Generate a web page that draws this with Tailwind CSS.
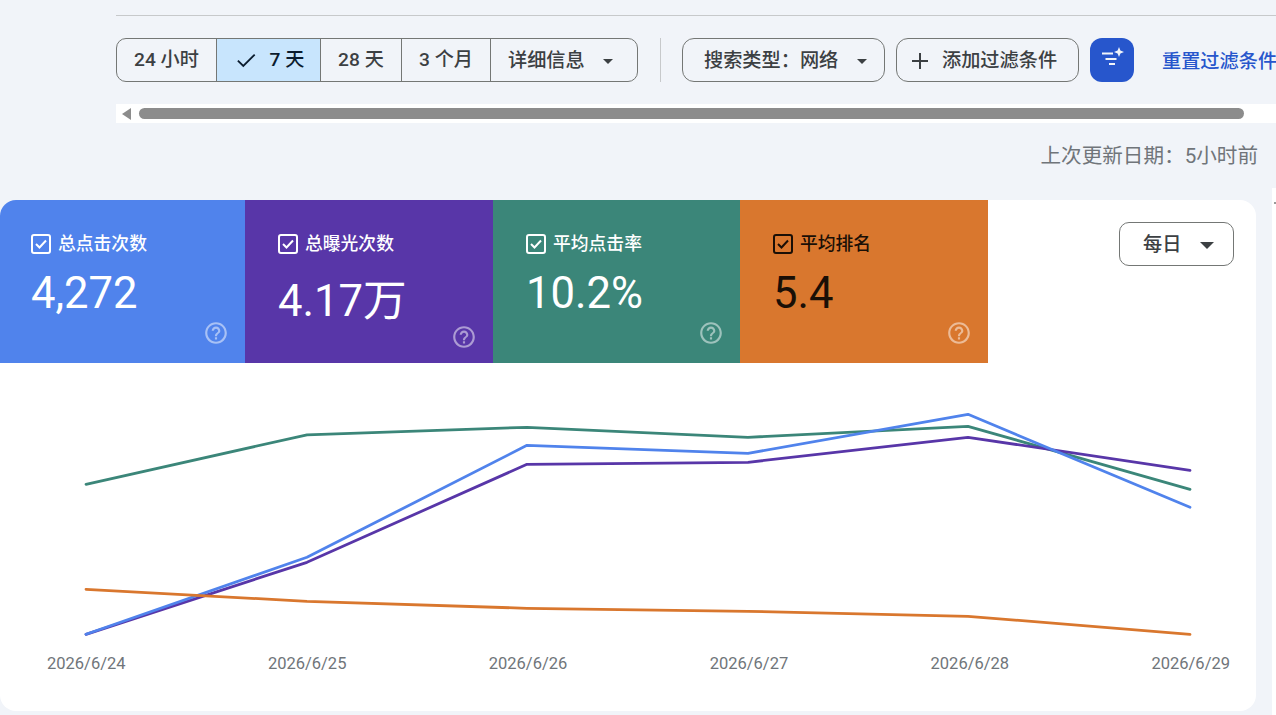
<!DOCTYPE html>
<html lang="zh-CN">
<head>
    <meta charset="UTF-8">
    <title>效果</title>
    <script src="https://cdn.jsdelivr.net/npm/@tailwindcss/browser@4"></script>
</head>
<body class="bg-[#f1f4f9] h-screen w-screen overflow-hidden font-['Roboto','Noto_Sans_CJK_SC',sans-serif]">
    <!-- 顶部分隔线 -->
    <div class="ml-[116px] mt-[15px] h-px bg-[#c7c9cb]"></div>

    <!-- 过滤条 -->
    <div class="ml-[116px] mt-[22px] flex h-[44px] items-center whitespace-nowrap text-[19.200px] font-medium text-[#3c4043]">
        <div class="flex h-[44px] w-[522px] shrink-0 overflow-hidden rounded-[10px] border border-[#747775]">
            <div class="flex w-[100px] items-center justify-center border-r border-[#747775]">24 小时</div>
            <div class="flex w-[104px] items-center justify-center gap-[11px] border-r border-[#747775] bg-[#c8e5fd] text-[#0b1c2e]">
                <svg class="h-[26px] w-[26px]" viewBox="0 0 24 24" fill="none" stroke="currentColor" stroke-width="1.700"><path d="M4.500 12.500l5 5L20 7"/></svg>
                <span>7 天</span>
            </div>
            <div class="flex w-[81px] items-center justify-center border-r border-[#747775]">28 天</div>
            <div class="flex w-[89px] items-center justify-center border-r border-[#747775]">3 个月</div>
            <div class="flex flex-1 items-center pl-[17px] pt-[2px]">
                <span>详细信息</span>
                <span class="ml-[18px] h-0 w-0 border-x-[5px] border-t-[5px] border-x-transparent border-t-[#3c4043]"></span>
            </div>
        </div>
        <div class="ml-[22px] h-[44px] w-px shrink-0 bg-[#c7c9cb]"></div>
        <div class="ml-[21px] flex h-[44px] w-[203px] shrink-0 items-center rounded-[12px] border border-[#747775] pl-[21px] pt-[2px]">
            <span>搜索类型：网络</span>
            <span class="ml-[19px] h-0 w-0 border-x-[5px] border-t-[5px] border-x-transparent border-t-[#3c4043]"></span>
        </div>
        <div class="ml-[11px] flex h-[44px] w-[183px] shrink-0 items-center rounded-[12px] border border-[#747775] pl-[13px] pt-[2px]">
            <svg class="h-[20px] w-[20px]" viewBox="0 0 20 20" fill="none" stroke="currentColor" stroke-width="2"><path d="M10 2v16M2 10h16"/></svg>
            <span class="ml-[12px]">添加过滤条件</span>
        </div>
        <div class="ml-[11px] flex h-[44px] w-[44px] shrink-0 items-center justify-center rounded-[12px] bg-[#2756cc]">
            <svg class="h-[26px] w-[26px]" viewBox="0 0 26 26" fill="#f1f4f9">
                <rect x="3" y="5.500" width="11" height="2"/>
                <rect x="6.500" y="11" width="11" height="2"/>
                <rect x="10" y="16" width="6" height="2"/>
                <path d="M20 0l1.400 3.600L25 5l-3.600 1.400L20 10l-1.400-3.600L15 5l3.600-1.400z"/>
            </svg>
        </div>
        <span class="ml-[28px] pt-[4px] text-[#2756cc]">重置过滤条件</span>
    </div>

    <!-- 横向滚动条 -->
    <div class="ml-[116px] mt-[22px] flex h-[19px] items-center bg-white pl-[6px]">
        <span class="h-0 w-0 border-y-[6px] border-r-[9px] border-y-transparent border-r-[#8c8c8c]"></span>
        <div class="ml-[8px] h-[11px] w-[1105px] rounded-full bg-[#8c8c8c]"></div>
    </div>

    <p class="mt-[21px] h-[24px] pr-[18px] text-right text-[20.600px] leading-[24px] text-[#70757a]">上次更新日期：5小时前</p>

    <div class="mt-[32px] flex items-start">
        <!-- 效果卡片 -->
        <div class="h-[511px] w-[1256px] shrink-0 overflow-hidden rounded-[16px] bg-white">
            <div class="flex h-[163px]">
                <div class="flex w-[245px] flex-col bg-[#5083ec] pl-[31px] pr-[16px] pt-[33px] text-white">
                    <div class="flex h-[22px] items-center gap-[7px] text-[17.800px] font-medium">
                        <svg class="h-[20px] w-[20px]" viewBox="0 0 20 20" fill="none" stroke="currentColor"><rect x="1" y="1" width="18" height="18" rx="2" stroke-width="2"/><path d="M5 10l3.500 3.500L15 6.500" stroke-width="2"/></svg>
                        <span>总点击次数</span>
                    </div>
                    <div class="mt-[17px] text-[43.600px] leading-[44px]">4,272</div>
                    <svg class="mb-[17px] mt-auto h-[26px] w-[26px] shrink-0 self-end opacity-50" viewBox="0 0 24 24" fill="currentColor"><path d="M11 18h2v-2h-2v2zm1-16C6.480 2 2 6.480 2 12s4.480 10 10 10 10-4.480 10-10S17.520 2 12 2zm0 18c-4.410 0-8-3.590-8-8s3.590-8 8-8 8 3.590 8 8-3.590 8-8 8zm0-14c-2.210 0-4 1.790-4 4h2c0-1.100.9-2 2-2s2 .9 2 2c0 2-3 1.750-3 5h2c0-2.250 3-2.500 3-5 0-2.210-1.790-4-4-4z"/></svg>
                </div>
                <div class="flex w-[248px] flex-col bg-[#5836a8] pl-[33px] pr-[16px] pt-[33px] text-white">
                    <div class="flex h-[22px] items-center gap-[7px] text-[17.800px] font-medium">
                        <svg class="h-[20px] w-[20px]" viewBox="0 0 20 20" fill="none" stroke="currentColor"><rect x="1" y="1" width="18" height="18" rx="2" stroke-width="2"/><path d="M5 10l3.500 3.500L15 6.500" stroke-width="2"/></svg>
                        <span>总曝光次数</span>
                    </div>
                    <div class="mt-[25px] text-[43.600px] leading-[44px]">4.17万</div>
                    <svg class="mb-[17px] mt-auto h-[26px] w-[26px] shrink-0 self-end opacity-50" viewBox="0 0 24 24" fill="currentColor"><path d="M11 18h2v-2h-2v2zm1-16C6.480 2 2 6.480 2 12s4.480 10 10 10 10-4.480 10-10S17.520 2 12 2zm0 18c-4.410 0-8-3.590-8-8s3.590-8 8-8 8 3.590 8 8-3.590 8-8 8zm0-14c-2.210 0-4 1.790-4 4h2c0-1.100.9-2 2-2s2 .9 2 2c0 2-3 1.750-3 5h2c0-2.250 3-2.500 3-5 0-2.210-1.790-4-4-4z"/></svg>
                </div>
                <div class="flex w-[247px] flex-col bg-[#3b8679] pl-[33px] pr-[16px] pt-[33px] text-white">
                    <div class="flex h-[22px] items-center gap-[7px] text-[17.800px] font-medium">
                        <svg class="h-[20px] w-[20px]" viewBox="0 0 20 20" fill="none" stroke="currentColor"><rect x="1" y="1" width="18" height="18" rx="2" stroke-width="2"/><path d="M5 10l3.500 3.500L15 6.500" stroke-width="2"/></svg>
                        <span>平均点击率</span>
                    </div>
                    <div class="mt-[17px] text-[43.600px] leading-[44px]">10.2%</div>
                    <svg class="mb-[17px] mt-auto h-[26px] w-[26px] shrink-0 self-end opacity-50" viewBox="0 0 24 24" fill="currentColor"><path d="M11 18h2v-2h-2v2zm1-16C6.480 2 2 6.480 2 12s4.480 10 10 10 10-4.480 10-10S17.520 2 12 2zm0 18c-4.410 0-8-3.590-8-8s3.590-8 8-8 8 3.590 8 8-3.590 8-8 8zm0-14c-2.210 0-4 1.790-4 4h2c0-1.100.9-2 2-2s2 .9 2 2c0 2-3 1.750-3 5h2c0-2.250 3-2.500 3-5 0-2.210-1.790-4-4-4z"/></svg>
                </div>
                <div class="flex w-[248px] flex-col bg-[#d9772e] pl-[33px] pr-[16px] pt-[33px] text-[#1a0f06]">
                    <div class="flex h-[22px] items-center gap-[7px] text-[17.800px] font-medium">
                        <svg class="h-[20px] w-[20px]" viewBox="0 0 20 20" fill="none" stroke="currentColor"><rect x="1" y="1" width="18" height="18" rx="2" stroke-width="2"/><path d="M5 10l3.500 3.500L15 6.500" stroke-width="2"/></svg>
                        <span>平均排名</span>
                    </div>
                    <div class="mt-[17px] text-[43.600px] leading-[44px]">5.4</div>
                    <svg class="mb-[17px] mt-auto h-[26px] w-[26px] shrink-0 self-end text-white opacity-50" viewBox="0 0 24 24" fill="currentColor"><path d="M11 18h2v-2h-2v2zm1-16C6.480 2 2 6.480 2 12s4.480 10 10 10 10-4.480 10-10S17.520 2 12 2zm0 18c-4.410 0-8-3.590-8-8s3.590-8 8-8 8 3.590 8 8-3.590 8-8 8zm0-14c-2.210 0-4 1.790-4 4h2c0-1.100.9-2 2-2s2 .9 2 2c0 2-3 1.750-3 5h2c0-2.250 3-2.500 3-5 0-2.210-1.790-4-4-4z"/></svg>
                </div>
                <div class="flex flex-1 justify-end pr-[22px] pt-[22px]">
                    <div class="flex h-[44px] w-[115px] items-center rounded-[10px] border border-[#747775] pl-[23px] pt-[3px] text-[19.200px] font-medium text-[#3c4043]">
                        <span>每日</span>
                        <span class="ml-[19px] h-0 w-0 border-x-[7px] border-t-[7px] border-x-transparent border-t-[#3c4043]"></span>
                    </div>
                </div>
            </div>

            <!-- 折线图 -->
            <svg class="block h-[284px] w-[1256px]" viewBox="0 362.700 1256 284" fill="none" stroke-width="2.800" stroke-linejoin="round" stroke-linecap="round">
                <polyline stroke="#3b8679" points="86,484 307,434.500 527,427 748,437 968,426 1190,489"/>
                <polyline stroke="#5836a8" points="86,634 307,562 527,464 748,462 968,437 1190,470"/>
                <polyline stroke="#5083ec" points="86,634 307,557 527,445 748,453 968,414 1190,507"/>
                <polyline stroke="#d9772e" points="86,589 307,601 527,608 748,611 968,616 1190,634"/>
            </svg>
            <div class="mt-[6px] flex justify-between pl-[47px] pr-[26px] text-[16.500px] leading-[22px] text-[#70757a]">
                <span>2026/6/24</span>
                <span>2026/6/25</span>
                <span>2026/6/26</span>
                <span>2026/6/27</span>
                <span>2026/6/28</span>
                <span>2026/6/29</span>
            </div>
        </div>
        <div class="-mt-[12px] ml-[16px] h-[527px] flex-1 bg-white pl-[2px] pt-[14px]">
            <div class="h-[2px] w-[2px] bg-[#9a9a9a]"></div>
        </div>
    </div>
</body>
</html>
